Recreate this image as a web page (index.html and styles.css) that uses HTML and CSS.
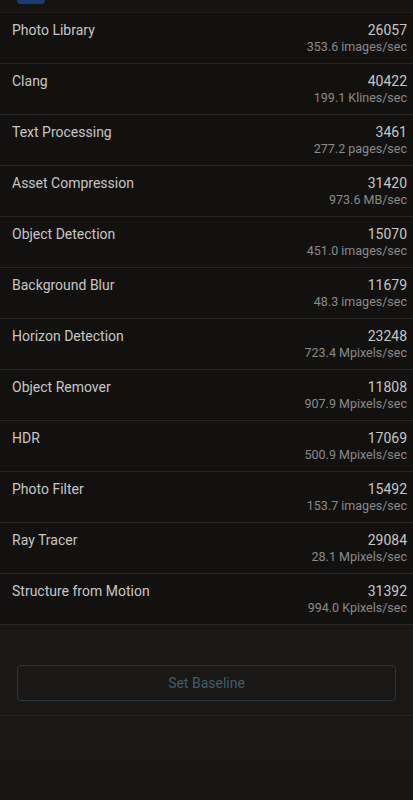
FILE: index.html
```html
<!DOCTYPE html>
<html>
<head>
<meta charset="utf-8">
<link rel="stylesheet" href="styles.css">
</head>
<body>
<div class="header"><div class="tab"></div></div>
<div class="list">
  <div class="row"><div class="line"><span class="name">Photo Library</span><span class="score">26057</span></div><div class="rate">353.6 images/sec</div></div>
  <div class="row"><div class="line"><span class="name">Clang</span><span class="score">40422</span></div><div class="rate">199.1 Klines/sec</div></div>
  <div class="row"><div class="line"><span class="name">Text Processing</span><span class="score">3461</span></div><div class="rate">277.2 pages/sec</div></div>
  <div class="row"><div class="line"><span class="name">Asset Compression</span><span class="score">31420</span></div><div class="rate">973.6 MB/sec</div></div>
  <div class="row"><div class="line"><span class="name">Object Detection</span><span class="score">15070</span></div><div class="rate">451.0 images/sec</div></div>
  <div class="row"><div class="line"><span class="name">Background Blur</span><span class="score">11679</span></div><div class="rate">48.3 images/sec</div></div>
  <div class="row"><div class="line"><span class="name">Horizon Detection</span><span class="score">23248</span></div><div class="rate">723.4 Mpixels/sec</div></div>
  <div class="row"><div class="line"><span class="name">Object Remover</span><span class="score">11808</span></div><div class="rate">907.9 Mpixels/sec</div></div>
  <div class="row"><div class="line"><span class="name">HDR</span><span class="score">17069</span></div><div class="rate">500.9 Mpixels/sec</div></div>
  <div class="row"><div class="line"><span class="name">Photo Filter</span><span class="score">15492</span></div><div class="rate">153.7 images/sec</div></div>
  <div class="row"><div class="line"><span class="name">Ray Tracer</span><span class="score">29084</span></div><div class="rate">28.1 Mpixels/sec</div></div>
  <div class="row"><div class="line"><span class="name">Structure from Motion</span><span class="score">31392</span></div><div class="rate">994.0 Kpixels/sec</div></div>
</div>
<div class="actions">
  <button class="baseline">Set Baseline</button>
</div>
<div class="gap"></div>
<div class="footer"></div>
</body>
</html>
```
FILE: styles.css
```css
html, body {
  margin: 0;
  padding: 0;
  background: #171513;
}
body {
  width: 413px;
  height: 800px;
  overflow: hidden;
  font-family: Roboto, "Liberation Sans", sans-serif;
}
.header {
  height: 13px;
  box-sizing: border-box;
  background: #161412;
  padding-left: 17px;
  border-bottom: 1px solid #1e1c1a;
}
.tab {
  width: 28px;
  height: 4px;
  background: #1b3d6e;
  border-radius: 0 0 5px 5px;
}
.list {
  background: #131110;
}
.row {
  height: 51px;
  box-sizing: border-box;
  padding: 8px 6px 0 12px;
  border-bottom: 1px solid #272523;
}
.line {
  display: flex;
  justify-content: space-between;
  height: 18px;
  line-height: 18px;
  font-size: 14px;
  color: #c6c6c4;
}
.rate {
  text-align: right;
  font-size: 12.5px;
  line-height: 16px;
  color: #8b8a88;
}
.actions {
  background: #1a1816;
  height: 91px;
  box-sizing: border-box;
  padding: 40px 17px 0 17px;
  border-bottom: 1px solid #23211f;
}
.baseline {
  display: block;
  width: 379px;
  height: 36px;
  box-sizing: border-box;
  background: transparent;
  border: 1.5px solid #27353d;
  border-radius: 4px;
  color: #3f5d6d;
  font-family: Roboto, "Liberation Sans", sans-serif;
  font-size: 14px;
}
.gap {
  height: 44px;
  background: #1b1916;
}
.footer {
  height: 40px;
  background: #181613;
}
```
